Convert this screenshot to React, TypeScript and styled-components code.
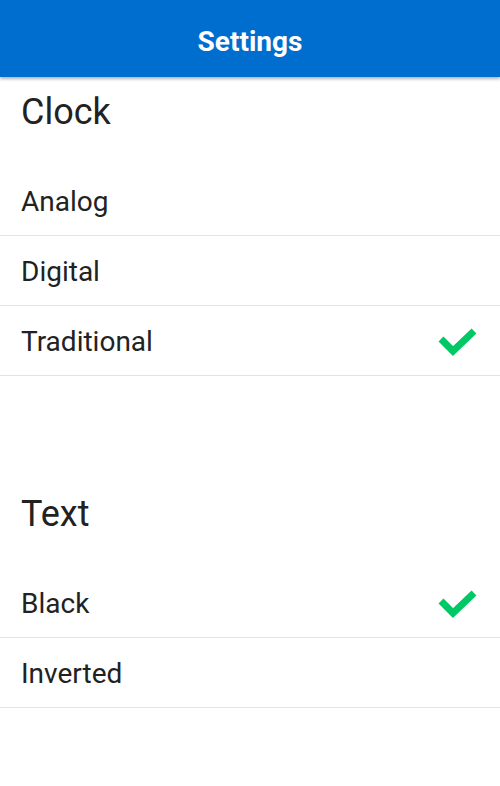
import styled, { createGlobalStyle } from "styled-components";

type Section = { title: string; options: { label: string; checked?: boolean }[] };

const sections: Section[] = [
  {
    title: "Clock",
    options: [{ label: "Analog" }, { label: "Digital" }, { label: "Traditional", checked: true }],
  },
  {
    title: "Text",
    options: [{ label: "Black", checked: true }, { label: "Inverted" }],
  },
];

const Check = () => (
  <svg width="40" height="30" viewBox="0 0 40 30">
    <polyline
      points="3,12 15,24 36,4"
      fill="none"
      stroke="#00c864"
      strokeWidth="7"
      strokeLinejoin="miter"
    />
  </svg>
);

const App = () => {
  return (
    <Page>
      <GlobalStyle />
      <Header>Settings</Header>
      {sections.map((section) => (
        <SectionBlock key={section.title}>
          <SectionTitle>{section.title}</SectionTitle>
          {section.options.map((opt) => (
            <Row key={opt.label}>
              <Label>{opt.label}</Label>
              {opt.checked && <Check />}
            </Row>
          ))}
        </SectionBlock>
      ))}
    </Page>
  );
};

export default App;

const GlobalStyle = createGlobalStyle`
  body {
    margin: 0;
    background: #fff;
    font-family: Roboto, "Liberation Sans", sans-serif;
  }
`;

const Page = styled.div`
  width: 500px;
  min-height: 786px;
  background: #fff;
`;

const Header = styled.div`
  height: 77px;
  padding-top: 6px;
  box-sizing: border-box;
  background: #006ecf;
  color: #fff;
  font-size: 28px;
  font-weight: bold;
  display: flex;
  align-items: center;
  justify-content: center;
  box-shadow: 0 2px 3px rgba(0, 0, 0, 0.3);
  position: relative;
`;

const SectionBlock = styled.div`
  display: flex;
  flex-direction: column;
  margin-bottom: 103px;
`;

const SectionTitle = styled.div`
  height: 89px;
  padding: 13px 21px 0;
  box-sizing: border-box;
  font-size: 36px;
  line-height: 44px;
  color: #222;
`;

const Row = styled.div`
  height: 70px;
  box-sizing: border-box;
  border-bottom: 1px solid #e3e3e3;
  padding: 2px 22px 0 21px;
  display: flex;
  align-items: center;
  justify-content: space-between;
`;

const Label = styled.span`
  font-size: 28px;
  color: #222;
`;
